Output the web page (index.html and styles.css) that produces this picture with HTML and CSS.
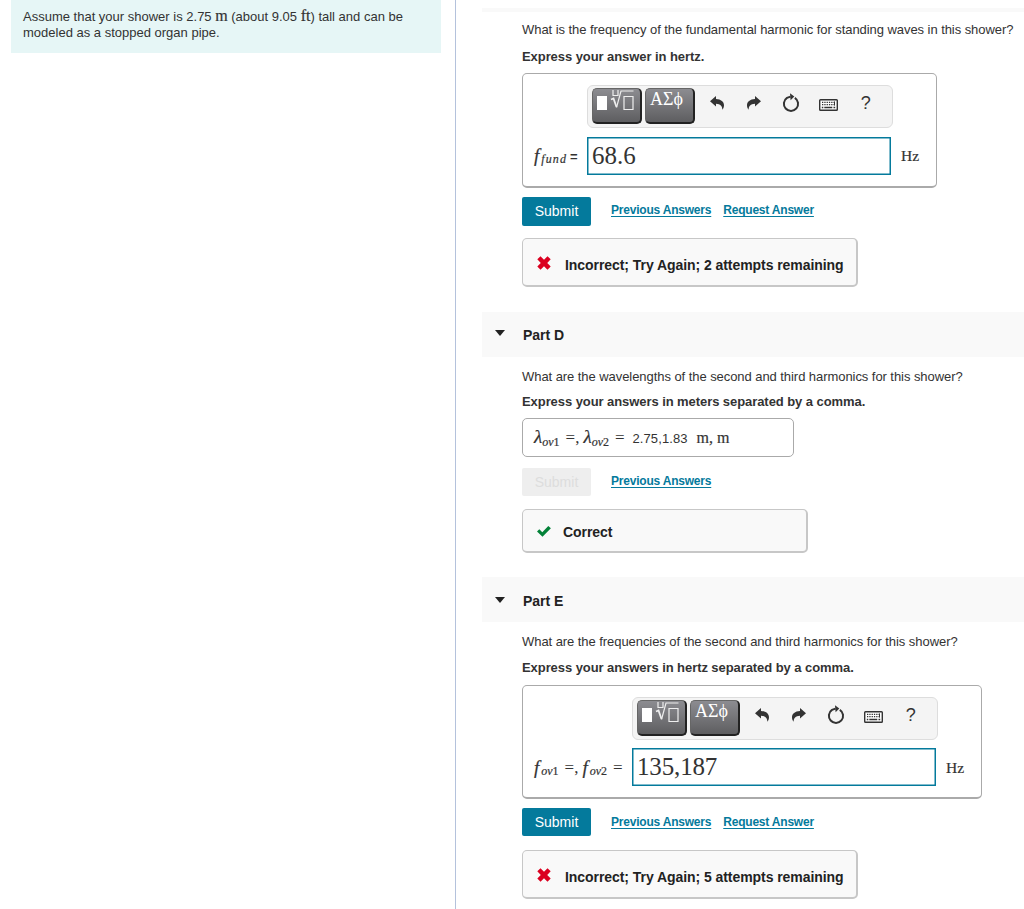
FILE: index.html
```html
<!DOCTYPE html>
<html lang="en">
<head>
  <meta charset="UTF-8">
  <title>Shower Harmonics</title>
  <link rel="stylesheet" href="styles.css">
</head>
<body>
  <!-- shared icons -->
  <svg class="sprite" width="0" height="0">
    <symbol id="undo" viewBox="0 0 14 14"><path d="M0 5.200 6 0v2.900c5 .2 8 2.800 8 6.300 0 1.700-.6 3.300-1.600 4.500C12.300 10.200 10.500 7.800 6 7.700v2.900z"/></symbol>
    <symbol id="reset" viewBox="0 0 18 20"><path d="M12.800 4.800A7.100 7.100 0 1 1 5 4.900L8.500 3.600" fill="none" stroke="#333" stroke-width="2"/><path d="M8 0.300 12.300 3.400 8.600 7.200z"/></symbol>
    <symbol id="keyboard" viewBox="0 0 19 12"><rect x=".7" y=".7" width="17.600" height="10.600" rx=".8" fill="#fff" stroke="#333" stroke-width="1.400"/><path d="M3 3.300h13M3 5.700h13" stroke="#333" stroke-width="1.300" stroke-dasharray="1.300 1"/><path d="M2.800 8.500h1.500M5.300 8.500h8M14.500 8.500h1.700" stroke="#333" stroke-width="1.500"/><path d="M15.500 2.500v4" stroke="#333"/></symbol>
    <symbol id="cross" viewBox="0 0 14 14"><path d="M3.500.3 7 3.800 10.500.3 13.700 3.300 10.200 7l3.500 3.600-3.200 3.100L7 10.200l-3.500 3.500L.3 10.600 3.800 7 .3 3.300z"/></symbol>
    <symbol id="check" viewBox="0 0 14 11"><path d="M0 5.600 2.300 3.300 5.300 6.200 11.300 0 13.900 2.200 5.500 10.800z"/></symbol>
    <symbol id="root" viewBox="0 0 38 22"><path d="M0 6h10v14H0z" fill="#fff"/><g fill="none" stroke="#eee"><path d="M16 0v5.500h5V0" stroke-width="1.200"/><path d="M14 9.500 16.500 8.500 19.500 17" stroke-width="1.800"/><path d="M19.500 17.500 24 1H36.500" stroke-width="1.200"/><path d="M27 6.500h9v13h-9z" stroke-width="1.200"/></g></symbol>
  </svg>

  <div class="page">
    <div class="left">
      <div class="intro">Assume that your shower is 2.75 <span class="unit">m</span> (about 9.05 <span class="unit ft">ft</span>) tall and can be<br>modeled as a stopped organ pipe.</div>
    </div>

    <div class="right">
      <div class="strip"></div>
      <div class="part part-c">
        <p class="question q-c">What is the frequency of the fundamental harmonic for standing waves in this shower?</p>
        <p class="instruction i-c">Express your answer in hertz.</p>
        <div class="answer answer-c">
          <div class="label"><i class="var">f</i><i class="sub fund">fund</i><b class="eq">=</b></div>
          <div class="editor">
            <div class="toolbar">
              <button class="tool"><svg width="38" height="22"><use href="#root"/></svg></button>
              <button class="tool greek">ΑΣϕ</button>
              <span class="icon"><svg width="14" height="14"><use href="#undo"/></svg></span>
              <span class="icon"><svg class="flip" width="14" height="14"><use href="#undo"/></svg></span>
              <span class="icon"><svg width="18" height="20"><use href="#reset"/></svg></span>
              <span class="icon low"><svg width="19" height="12"><use href="#keyboard"/></svg></span>
              <span class="icon help">?</span>
            </div>
            <div class="field">68.6</div>
          </div>
          <div class="hz">Hz</div>
        </div>
        <div class="actions">
          <button class="submit">Submit</button>
          <a class="link" href="#">Previous Answers</a>
          <a class="link" href="#">Request Answer</a>
        </div>
        <div class="feedback"><svg class="cross" width="14" height="14"><use href="#cross"/></svg><span>Incorrect; Try Again; 2 attempts remaining</span></div>
      </div>

      <div class="header header-d"><span class="arrow"></span>Part D</div>
      <div class="part part-d">
        <p class="question q-d">What are the wavelengths of the second and third harmonics for this shower?</p>
        <p class="instruction i-d">Express your answers in meters separated by a comma.</p>
        <div class="result"><i class="var">λ</i><i class="sub">ov<span class="num">1</span></i><span class="equals">=,</span><i class="var">λ</i><i class="sub">ov<span class="num">2</span></i><span class="equals">=</span><span class="value">2.75,1.83</span><span class="unit">m, m</span></div>
        <div class="actions">
          <button class="submit disabled">Submit</button>
          <a class="link" href="#">Previous Answers</a>
        </div>
        <div class="feedback correct"><svg class="check" width="14" height="11"><use href="#check"/></svg><span>Correct</span></div>
      </div>

      <div class="header header-e"><span class="arrow"></span>Part E</div>
      <div class="part part-e">
        <p class="question q-e">What are the frequencies of the second and third harmonics for this shower?</p>
        <p class="instruction i-e">Express your answers in hertz separated by a comma.</p>
        <div class="answer answer-e">
          <div class="label"><i class="var">f</i><i class="sub">ov<span class="num">1</span></i><span class="equals">=,</span><i class="var">f</i><i class="sub">ov<span class="num">2</span></i><span class="equals">=</span></div>
          <div class="editor">
            <div class="toolbar">
              <button class="tool"><svg width="38" height="22"><use href="#root"/></svg></button>
              <button class="tool greek">ΑΣϕ</button>
              <span class="icon"><svg width="14" height="14"><use href="#undo"/></svg></span>
              <span class="icon"><svg class="flip" width="14" height="14"><use href="#undo"/></svg></span>
              <span class="icon"><svg width="18" height="20"><use href="#reset"/></svg></span>
              <span class="icon low"><svg width="19" height="12"><use href="#keyboard"/></svg></span>
              <span class="icon help">?</span>
            </div>
            <div class="field">135,187</div>
          </div>
          <div class="hz">Hz</div>
        </div>
        <div class="actions">
          <button class="submit">Submit</button>
          <a class="link" href="#">Previous Answers</a>
          <a class="link" href="#">Request Answer</a>
        </div>
        <div class="feedback"><svg class="cross" width="14" height="14"><use href="#cross"/></svg><span>Incorrect; Try Again; 5 attempts remaining</span></div>
      </div>
    </div>
  </div>
</body>
</html>
```

FILE: styles.css
```css
* {
  box-sizing: border-box;
}
body {
  margin: 0;
  background: #fff;
  color: #333;
  font-family: "Liberation Sans", Arial, sans-serif;
  font-size: 13px;
  line-height: 16px;
}
.sprite {
  display: none;
}
.page {
  display: flex;
  height: 909px;
  overflow: hidden;
}
.left {
  width: 456px;
  flex: none;
  padding-left: 11px;
  border-right: 1px solid #b4c2dc;
}
.intro {
  width: 430px;
  height: 53px;
  padding: 9px 12px;
  background: #e6f6f6;
  white-space: nowrap;
}
.unit {
  font-family: "Liberation Serif", serif;
  font-size: 16px;
  line-height: 1px;
  -webkit-text-stroke: 0.2px #333;
}
.right {
  flex: 1;
  min-width: 0;
  padding: 8px 0 0 26px;
  white-space: nowrap;
}
.strip {
  height: 4px;
  background: #f9f9f9;
}
.part {
  padding-left: 40px;
}
.question,
.instruction {
  margin: 0;
}
.question {
  letter-spacing: -0.06px;
}
.instruction {
  font-weight: bold;
  letter-spacing: -0.07px;
}
.q-c {
  padding-top: 10px;
}
.i-c {
  padding: 11px 0 8px;
}
.q-d {
  padding-top: 12px;
}
.i-d {
  padding: 9px 0 8px;
}
.q-e {
  padding-top: 12px;
}
.i-e {
  padding: 10px 0 9px;
}
.answer {
  display: flex;
  height: 115px;
  padding: 11px 0 0 11px;
  border: 1px solid #aaa;
  border-bottom-width: 2px;
  border-radius: 5px;
}
.answer-c {
  width: 415px;
}
.answer-e {
  width: 460px;
  height: 114px;
}
.label {
  width: 53px;
  padding-top: 63px;
}
.answer-e .label {
  width: 98px;
}
.label,
.result {
  display: flex;
  align-items: baseline;
}
.label {
  align-items: flex-start;
}
.var {
  font-family: "Liberation Serif", serif;
  font-size: 19px;
  margin-right: 0;
  -webkit-text-stroke: 0.2px #333;
}
.label .var {
  font-size: 19px;
  margin-right: 2px;
}
.sub {
  font-family: "Liberation Serif", serif;
  font-size: 12px;
  position: relative;
  top: 3px;
  -webkit-text-stroke: 0.2px #333;
}
.num {
  font-style: normal;
}
.fund {
  letter-spacing: 1.1px;
}
.eq {
  margin: 1px 0 0 3px;
}
.equals {
  font-family: "Liberation Serif", serif;
  font-size: 17px;
  margin: 0 4px 0 6px;
}
.editor {
  width: 306px;
}
.toolbar {
  display: flex;
  height: 43px;
  padding: 2px 0 0 4px;
  border: 1px solid #ddd;
  border-radius: 6px;
  background: #f4f4f4;
}
.tool {
  width: 50px;
  height: 36px;
  margin: 0 3px 0 0;
  padding: 0 0 9px 4px;
  border: 1px solid #666;
  border-right: 2px solid #222;
  border-bottom: 2px solid #222;
  border-radius: 5px;
  background: linear-gradient(#8c8c91, #5e5e60);
  color: #fff;
  text-align: left;
}
.tool svg {
  display: block;
}
.greek {
  padding: 0 0 14px 4px;
  font: 18px "Liberation Serif", serif;
}
.icon {
  display: flex;
  align-items: center;
  justify-content: center;
  width: 37.300px;
  height: 29px;
  fill: #333;
}
.flip {
  transform: scaleX(-1);
}
.low {
  padding-top: 5px;
}
.help {
  font-size: 18px;
}
.field {
  width: 304px;
  height: 38px;
  margin-top: 9px;
  padding: 0 4px;
  border: 1px solid #047a9c;
  box-shadow: inset 0 0 0 0.5px #047a9c;
  font: 25px/36px "Liberation Serif", serif;
}
.answer-e .field {
  margin-top: 8px;
  letter-spacing: -0.15px;
}
.hz {
  padding: 62px 0 0 8px;
  font-family: "Liberation Serif", serif;
  font-size: 15.500px;
  line-height: 18px;
  -webkit-text-stroke: 0.2px #333;
}
.actions {
  display: flex;
  height: 29px;
  margin-top: 9px;
}
.submit {
  width: 69px;
  height: 28px;
  margin: 0 20px 0 0;
  padding: 0;
  border: 0;
  border-radius: 2px;
  background: #047a9c;
  color: #fff;
  font: 14px "Liberation Sans", Arial, sans-serif;
}
.part-c .submit {
  height: 29px;
  padding-bottom: 1px;
}
.disabled {
  background: #eee;
  color: #ddd;
}
.link {
  margin-right: 12px;
  padding-top: 5px;
  color: #047a9c;
  font-size: 12px;
  font-weight: bold;
  letter-spacing: -0.21px;
  text-underline-offset: 2px;
}
.part-e .link {
  padding-top: 6px;
}
.feedback {
  display: flex;
  align-items: center;
  width: 336px;
  height: 49px;
  margin-top: 12px;
  padding: 5px 0 0 14px;
  border: 1px solid #c7c7c7;
  border-right-width: 2px;
  border-bottom-width: 2px;
  border-radius: 5px;
  background: #f9f9f9;
  color: #222;
  font-size: 14px;
  font-weight: bold;
  letter-spacing: -0.06px;
}
.part-e .feedback {
  margin-top: 13px;
}
.cross {
  margin: -4px 14px 0 0;
  fill: #db0020;
}
.check {
  margin-right: 12px;
  fill: #038238;
}
.correct {
  width: 286px;
  height: 44px;
  padding-top: 2px;
}
.header {
  display: flex;
  align-items: center;
  height: 45px;
  background: #f9f9f9;
  color: #222;
  font-size: 14px;
  font-weight: bold;
}
.header-d {
  margin-top: 25px;
}
.header-e {
  margin-top: 24px;
  padding-top: 2px;
}
.arrow {
  margin: 0 18px 3px 13px;
  border: 5.500px solid transparent;
  border-top: 6px solid #222;
  border-bottom: 0;
}
.header-e .arrow {
  margin-bottom: 1px;
}
.result {
  width: 272px;
  height: 39px;
  padding: 10px 0 0 11px;
  border: 1px solid #aaa;
  border-radius: 5px;
}
.value {
  margin: 0 9px 0 4px;
  letter-spacing: 0.08px;
}
.part-d .actions {
  margin-top: 11px;
}
```
